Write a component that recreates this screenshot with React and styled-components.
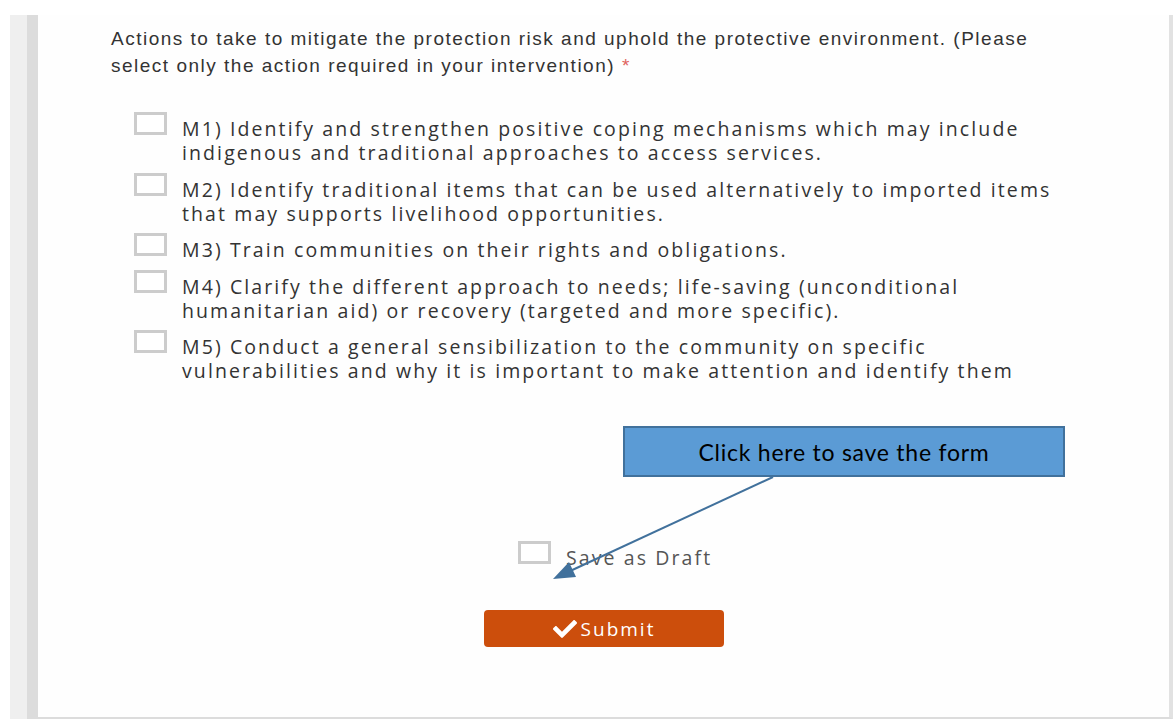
import React from "react";
import styled, { createGlobalStyle } from "styled-components";
import { FaCheck } from "react-icons/fa";

const GlobalStyle = createGlobalStyle`
  html, body {
    margin: 0;
    padding: 0;
    background: #ffffff;
  }
  body {
    font-family: "Open Sans", "Liberation Sans", sans-serif;
    overflow: hidden;
  }
`;

const actions = [
  "M1) Identify and strengthen positive coping mechanisms which may include indigenous and traditional approaches to access services.",
  "M2) Identify traditional items that can be used alternatively to imported items that may supports livelihood opportunities.",
  "M3) Train communities on their rights and obligations.",
  "M4) Clarify the different approach to needs; life-saving (unconditional humanitarian aid) or recovery (targeted and more specific).",
  "M5) Conduct a general sensibilization to the community on specific vulnerabilities and why it is important to make attention and identify them",
];

export default function App() {
  return (
    <>
      <GlobalStyle />
      <Frame>
        <SideStrip />
        <Panel>
          <Question>
            Actions to take to mitigate the protection risk and uphold the protective
            environment. (Please select only the action required in your intervention)
            <Required>*</Required>
          </Question>

          <OptionList>
            {actions.map((text) => (
              <Option key={text}>
                <Box />
                <OptionText>{text}</OptionText>
              </Option>
            ))}
          </OptionList>

          <DraftRow>
            <Box />
            <DraftLabel>Save as Draft</DraftLabel>
          </DraftRow>

          <SubmitButton type="button">
            <CheckIcon />
            Submit
          </SubmitButton>

          {/* help note with its pointer */}
          <Callout>Click here to save the form</Callout>
          <Arrow width="300" height="130" viewBox="0 0 300 130">
            <line x1="273" y1="17" x2="68" y2="112" stroke="#41719c" strokeWidth="2" />
            <polygon points="53,119 76,117 69,102" fill="#41719c" />
          </Arrow>
        </Panel>
      </Frame>
    </>
  );
}

const Frame = styled.div`
  display: flex;
  margin: 15px 0 0 10px;
  width: 1163px;
  height: 704px;
`;

const SideStrip = styled.div`
  width: 17px;
  background: #efefef;
`;

const Panel = styled.div`
  position: relative;
  flex: 1;
  box-sizing: border-box;
  border-left: 11px solid #dcdcdc;
  border-right: 4px solid #e2e2e2;
  border-bottom: 2px solid #dcdcdc;
  background: #fefefe;
  padding: 10px 0 0 73px;
  display: flex;
  flex-direction: column;
`;

const Question = styled.div`
  width: 975px;
  font-family: "Liberation Sans", Arial, sans-serif;
  font-size: 19px;
  line-height: 27px;
  letter-spacing: 1.5px;
  color: #333333;
`;

const Required = styled.span`
  margin-left: 7px;
  color: #e0645e;
`;

const OptionList = styled.div`
  display: flex;
  flex-direction: column;
  gap: 12.5px;
  margin: 38px 0 0 23px;
`;

const Option = styled.div`
  display: flex;
  align-items: flex-start;
  gap: 15px;
`;

const Box = styled.span`
  flex: none;
  box-sizing: border-box;
  width: 33px;
  height: 23px;
  margin-top: -5px;
  border: 3px solid #cccccc;
  background: #ffffff;
`;

const OptionText = styled.div`
  width: 880px;
  font-size: 19.5px;
  line-height: 24px;
  letter-spacing: 2.1px;
  color: #333333;
`;

const DraftRow = styled.div`
  display: flex;
  align-items: flex-start;
  gap: 15px;
  margin: 163px 0 0 407px;
`;

const DraftLabel = styled.span`
  font-size: 19.5px;
  line-height: 24px;
  letter-spacing: 2.1px;
  color: #555555;
`;

const SubmitButton = styled.button`
  display: flex;
  align-items: center;
  justify-content: center;
  gap: 4px;
  width: 240px;
  height: 37px;
  margin: 40px 0 0 373px;
  padding: 0;
  border: none;
  border-radius: 4px;
  background: #cc4e0c;
  color: #ffffff;
  font-family: "Open Sans", sans-serif;
  font-size: 19px;
  letter-spacing: 2px;
  cursor: pointer;
`;

const CheckIcon = styled(FaCheck)`
  width: 24px;
  height: 24px;
`;

const Callout = styled.div`
  position: absolute;
  left: 585px;
  top: 411px;
  box-sizing: border-box;
  width: 442px;
  height: 51px;
  display: flex;
  align-items: center;
  justify-content: center;
  background: #5b9bd5;
  border: 2px solid #41719c;
  font-family: Lato, "Open Sans", sans-serif;
  font-size: 23px;
  letter-spacing: 0.75px;
  color: #000000;
`;

const Arrow = styled.svg`
  position: absolute;
  left: 462px;
  top: 445px;
  overflow: visible;
`;
